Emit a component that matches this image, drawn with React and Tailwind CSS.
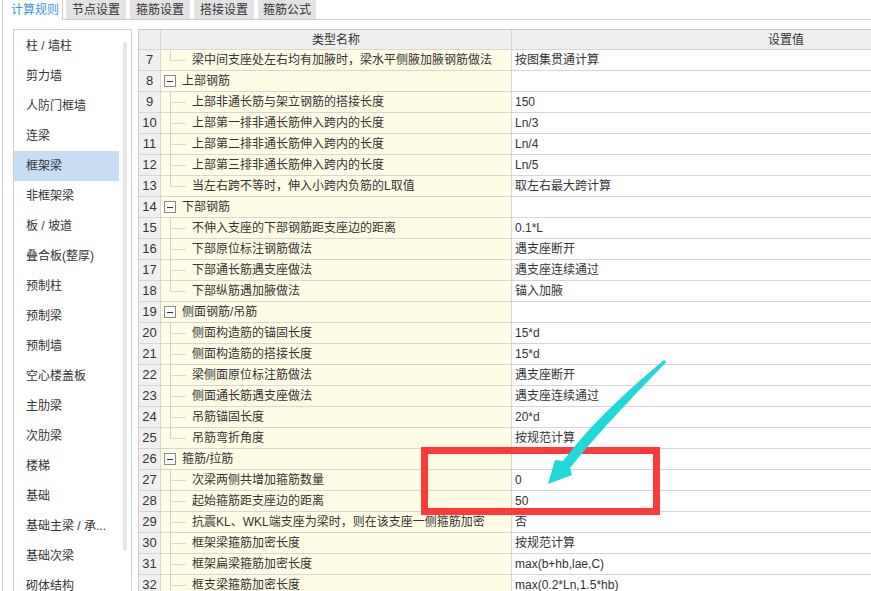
import React from 'react'

const tabs = ['节点设置', '箍筋设置', '搭接设置', '箍筋公式']

const sideItems = [
  '柱 / 墙柱',
  '剪力墙',
  '人防门框墙',
  '连梁',
  '框架梁',
  '非框架梁',
  '板 / 坡道',
  '叠合板(整厚)',
  '预制柱',
  '预制梁',
  '预制墙',
  '空心楼盖板',
  '主肋梁',
  '次肋梁',
  '楼梯',
  '基础',
  '基础主梁 / 承...',
  '基础次梁',
  '砌体结构',
]

// type: g = group, c = child, l = last child
const rows = [
  [7, 'l', '梁中间支座处左右均有加腋时，梁水平侧腋加腋钢筋做法', '按图集贯通计算'],
  [8, 'g', '上部钢筋', ''],
  [9, 'c', '上部非通长筋与架立钢筋的搭接长度', '150'],
  [10, 'c', '上部第一排非通长筋伸入跨内的长度', 'Ln/3'],
  [11, 'c', '上部第二排非通长筋伸入跨内的长度', 'Ln/4'],
  [12, 'c', '上部第三排非通长筋伸入跨内的长度', 'Ln/5'],
  [13, 'l', '当左右跨不等时，伸入小跨内负筋的L取值', '取左右最大跨计算'],
  [14, 'g', '下部钢筋', ''],
  [15, 'c', '不伸入支座的下部钢筋距支座边的距离', '0.1*L'],
  [16, 'c', '下部原位标注钢筋做法', '遇支座断开'],
  [17, 'c', '下部通长筋遇支座做法', '遇支座连续通过'],
  [18, 'l', '下部纵筋遇加腋做法', '锚入加腋'],
  [19, 'g', '侧面钢筋/吊筋', ''],
  [20, 'c', '侧面构造筋的锚固长度', '15*d'],
  [21, 'c', '侧面构造筋的搭接长度', '15*d'],
  [22, 'c', '梁侧面原位标注筋做法', '遇支座断开'],
  [23, 'c', '侧面通长筋遇支座做法', '遇支座连续通过'],
  [24, 'c', '吊筋锚固长度', '20*d'],
  [25, 'l', '吊筋弯折角度', '按规范计算'],
  [26, 'g', '箍筋/拉筋', ''],
  [27, 'c', '次梁两侧共增加箍筋数量', '0'],
  [28, 'c', '起始箍筋距支座边的距离', '50'],
  [29, 'c', '抗震KL、WKL端支座为梁时，则在该支座一侧箍筋加密', '否'],
  [30, 'c', '框架梁箍筋加密长度', '按规范计算'],
  [31, 'c', '框架扁梁箍筋加密长度', 'max(b+hb,lae,C)'],
  [32, 'c', '框支梁箍筋加密长度', 'max(0.2*Ln,1.5*hb)'],
]

function NameCell({ type, name }) {
  if (type === 'g') {
    return (
      <div className="w-[351px] h-full border-r border-[#d6d6d6] bg-[#fffce6] flex items-center pl-[3px]">
        <div className="w-[12px] h-[12px] border border-[#8a8a8a] bg-white flex items-center justify-center">
          <div className="w-[6px] h-px bg-[#333]" />
        </div>
        <span className="ml-[6px]">{name}</span>
      </div>
    )
  }
  return (
    <div className="relative w-[351px] h-full border-r border-[#d6d6d6] bg-[#fffce6] flex items-center pl-[31px] overflow-hidden whitespace-nowrap">
      <div
        className={
          type === 'l'
            ? 'absolute left-[9px] top-0 h-1/2 w-px bg-[#d0d0d0]'
            : 'absolute left-[9px] top-0 h-[21px] w-px bg-[#d0d0d0]'
        }
      />
      <div className="absolute left-[9px] top-[10px] w-[16px] h-px bg-[#d8d8d8]" />
      <span>{name}</span>
    </div>
  )
}

export default function App() {
  return (
    <div className="relative w-[871px] h-[591px] overflow-hidden bg-white text-[12px] text-[#333] font-['Liberation_Sans','Noto_Sans_CJK_SC',sans-serif]">
      <div className="pl-[2px] h-full">
        <div className="h-full border-l border-[#cfcfcf]">
          {/* tabs */}
          <div className="flex h-[20px]">
            <div className="w-[60px] h-[20px] border-r border-[#cfcfcf] bg-white text-[#3d94e6] text-[12px] flex items-center pl-[8px]">
              计算规则
            </div>
            <div className="flex-1 flex gap-[4px] pl-[3px] border-b border-[#cfcfcf]">
              {tabs.map((t, i) => (
                <div
                  key={t}
                  className={
                    (i === 3 ? 'w-[58px]' : 'w-[60px]') +
                    ' h-[19px] bg-[#e2e2e2] text-[12px] flex items-center justify-center'
                  }
                >
                  {t}
                </div>
              ))}
            </div>
          </div>

          {/* body */}
          <div className="flex pt-[9px] pl-[10px]">
            <div className="w-[119px] h-[600px] shrink-0 border border-[#cfcfcf] flex">
              <div className="w-[105px] pt-px">
                {sideItems.map((s) => (
                  <div
                    key={s}
                    className={
                      (s === '框架梁' ? 'bg-[#c6ddf3] ' : '') +
                      'h-[30px] flex items-center pl-[12px] whitespace-nowrap'
                    }
                  >
                    {s}
                  </div>
                ))}
              </div>
              <div className="ml-[4px] mt-[12px] w-[4px] h-[509px] rounded-full bg-[#e6e6e6]" />
            </div>

            <div className="ml-[6px] shrink-0 border-t border-l border-[#c9c9c9]">
              <div className="flex h-[20px] border-b border-[#d6d6d6] bg-[#efefef]">
                <div className="w-[22px] border-r border-[#d6d6d6]" />
                <div className="w-[351px] border-r border-[#d6d6d6] flex items-center justify-center">类型名称</div>
                <div className="w-[548px] flex items-center justify-center">设置值</div>
              </div>
              {rows.map(([n, type, name, val]) => (
                <div key={n} className="flex h-[21px] border-b border-[#d6d6d6]">
                  <div className="w-[22px] border-r border-[#d6d6d6] bg-[#f0f0f0] flex items-center justify-center text-[13px]">
                    {n}
                  </div>
                  <NameCell type={type} name={name} />
                  <div className="w-[548px] bg-white flex items-center pl-[3px] whitespace-nowrap">
                    {val}
                  </div>
                </div>
              ))}
            </div>
          </div>
        </div>
      </div>

      {/* annotations */}
      <div className="absolute left-[421px] top-[447px] w-[239px] h-[68px] border-[7px] border-[#fb3a3a]" />
      <svg className="absolute left-0 top-0" width="871" height="591" viewBox="0 0 871 591">
        <path
          d="M664 360 Q610 405 580 440 L563 461 L555 460 L548 484 L572 475 L570 468 Q600 430 666.5 362 Z"
          fill="#1fd8da"
        />
      </svg>
    </div>
  )
}
